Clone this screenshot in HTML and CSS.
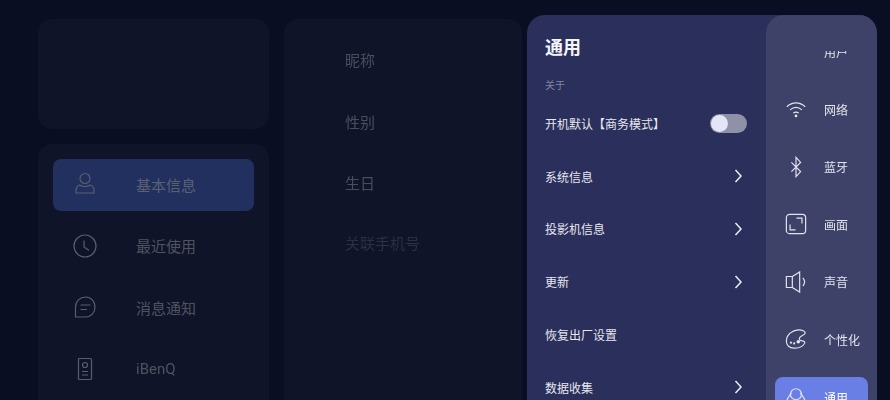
FILE: index.html
```html
<!DOCTYPE html>
<html lang="zh-CN">
<head>
<meta charset="utf-8">
<title>通用设置</title>
<link rel="stylesheet" href="styles.css">
</head>
<body>
<div class="app">
  <div class="col-left">
    <div class="card card-top"></div>
    <div class="card card-nav">
      <div class="nav-item active">
        <svg class="nav-icon" viewBox="0 0 24 24"><circle cx="12" cy="6.500" r="5"/><path d="M6.500 13c-3 1-4 3.500-3.500 8h18c.5-4.500-.5-7-3.500-8-3 2-8 2-11 0z"/></svg>
        <span>基本信息</span>
      </div>
      <div class="nav-item">
        <svg class="nav-icon" viewBox="0 0 24 24"><circle cx="12" cy="12" r="11"/><path d="M11 6.500v6.500l5 3.500"/></svg>
        <span>最近使用</span>
      </div>
      <div class="nav-item">
        <svg class="nav-icon" viewBox="0 0 24 24"><path d="M12.500 2c5.500 0 9.500 4.300 9.500 10s-4 10-9.500 10H2.500V12C2.500 6.300 7 2 12.500 2z"/><path d="M7.500 10h10M7.500 14.500h6.500"/></svg>
        <span>消息通知</span>
      </div>
      <div class="nav-item">
        <svg class="nav-icon" viewBox="0 0 24 24"><rect x="5.500" y="1.500" width="13" height="21" rx="1"/><circle cx="12" cy="8" r="2.500"/><path d="M9 14.500h6M9 18h6"/></svg>
        <span>iBenQ</span>
      </div>
    </div>
  </div>
  <div class="card card-profile">
    <div class="profile-row">昵称</div>
    <div class="profile-row">性别</div>
    <div class="profile-row">生日</div>
    <div class="profile-row dim">关联手机号</div>
  </div>
</div>

<div class="panel">
  <div class="settings">
    <h1 class="settings-title">通用</h1>
    <div class="settings-sub">关于</div>
    <div class="settings-row"><span>开机默认【商务模式】</span><span class="toggle"><span class="knob"></span></span></div>
    <div class="settings-row"><span>系统信息</span><svg class="chev" viewBox="0 0 8 14"><path d="M1.500 1l5.500 6-5.500 6"/></svg></div>
    <div class="settings-row"><span>投影机信息</span><svg class="chev" viewBox="0 0 8 14"><path d="M1.500 1l5.500 6-5.500 6"/></svg></div>
    <div class="settings-row"><span>更新</span><svg class="chev" viewBox="0 0 8 14"><path d="M1.500 1l5.500 6-5.500 6"/></svg></div>
    <div class="settings-row"><span>恢复出厂设置</span></div>
    <div class="settings-row"><span>数据收集</span><svg class="chev" viewBox="0 0 8 14"><path d="M1.500 1l5.500 6-5.500 6"/></svg></div>
  </div>
  <div class="rail">
    <div class="rail-clip">
      <div class="rail-list">
        <div class="rail-item"><span class="rail-icon"></span><span>用户</span></div>
        <div class="rail-item">
          <svg class="rail-icon" viewBox="0 0 24 24"><path d="M2 9.500c6-5.500 14-5.500 20 0M5.500 13c4-3.500 9-3.500 13 0M9 16.500c2-1.500 4-1.500 6 0"/><circle class="fill" cx="12" cy="19.500" r="1.500"/></svg>
          <span>网络</span>
        </div>
        <div class="rail-item">
          <svg class="rail-icon" viewBox="0 0 24 24"><path d="M7 7l10 10-5 5.500V1.500L17 7 7 17"/></svg>
          <span>蓝牙</span>
        </div>
        <div class="rail-item">
          <svg class="rail-icon" viewBox="0 0 24 24"><rect x="1.500" y="1.500" width="21" height="21" rx="3.500"/><path d="M12.500 5.500h6v6M5.500 12.500v6h6"/></svg>
          <span>画面</span>
        </div>
        <div class="rail-item">
          <svg class="rail-icon" viewBox="0 0 24 24"><path d="M1.500 6h6.500v12H1.500zM8 6l8-5v22l-8-5"/><path d="M19.500 7.500c2.500 3 2.500 6 0 9"/></svg>
          <span>声音</span>
        </div>
        <div class="rail-item">
          <svg class="rail-icon" viewBox="0 0 24 24"><path d="M14.500 2C8 2.500 1.500 7 1.500 14.500c0 4.500 3.500 7.500 8 7.500 5 0 10.500-2 12-5.500.5-1.500-1-2.500-3-2.500-2.500 0-3.500-2-2.500-3.500 1.500-2 5.500-3 6-5 .2-1.500-3.500-3.800-7.500-3.500z"/><circle class="fill" cx="6.500" cy="16" r="1.200"/><circle class="fill" cx="10" cy="16.800" r="1.200"/><circle class="fill" cx="14.500" cy="15" r="2"/></svg>
          <span>个性化</span>
        </div>
        <div class="rail-item active">
          <svg class="rail-icon" viewBox="0 0 24 24"><circle cx="12" cy="9" r="6"/><path d="M7 7.500C4 11 2 15 1.500 18c-.3 2 1 3 3 3h15c2 0 3.300-1 3-3-.5-3-3-7-6-10.500"/></svg>
          <span>通用</span>
        </div>
      </div>
    </div>
  </div>
</div>
</body>
</html>
```

FILE: styles.css
```css
* { box-sizing: border-box; }

html, body {
  margin: 0;
  width: 890px;
  height: 400px;
  overflow: hidden;
}

body {
  position: relative;
  background: #0a0e22;
  font-family: Roboto, "Noto Sans CJK SC", "Noto Sans", sans-serif;
}

.app {
  display: flex;
  gap: 15px;
  padding: 19px 0 0 38px;
  height: 400px;
  filter: blur(0.6px);
}

.col-left {
  display: flex;
  flex-direction: column;
  gap: 15px;
  width: 231px;
}

.card {
  background: #0f1428;
  border-radius: 14px;
}

.card-top { height: 110px; flex: none; }

.card-nav {
  flex: none;
  height: 300px;
  padding: 15px;
}

.nav-item {
  display: flex;
  align-items: center;
  gap: 39px;
  height: 52px;
  margin-bottom: 9.500px;
  padding: 0 0 2px 20px;
  border-radius: 8px;
  color: #4f5361;
  font-size: 15px;
}

.nav-item.active {
  background: #22305f;
  color: #5c6172;
}

.nav-icon {
  width: 24px;
  height: 24px;
  flex: none;
  fill: none;
  stroke: #5a5e6c;
  stroke-width: 1.200;
}

.card-profile {
  width: 238px;
  height: 400px;
  padding: 10px 0 0 61px;
  color: #4a4e5c;
  font-size: 15px;
}

.profile-row {
  height: 61.500px;
  display: flex;
  align-items: center;
}

.profile-row.dim {
  height: 58px;
  color: #2c3040;
}

.panel {
  position: absolute;
  left: 527px;
  top: 15px;
  width: 350px;
  height: 420px;
  display: flex;
  background: #2b2f5b;
  border-radius: 18px;
  filter: blur(0.5px);
}

.settings {
  flex: none;
  width: 239px;
  padding: 19px 19px 0 18px;
  color: #e6e7ef;
  font-size: 12px;
}

.settings-title {
  margin: 0;
  height: 28px;
  font-size: 18px;
  line-height: 28px;
  font-weight: 700;
  color: #f6f6fa;
}

.settings-sub {
  margin-top: 15px;
  height: 17px;
  line-height: 17px;
  font-size: 10px;
  color: #83869f;
}

.settings-row {
  display: flex;
  align-items: center;
  justify-content: space-between;
  height: 52.800px;
}

.settings-sub + .settings-row { margin-top: 3px; }

.toggle {
  position: relative;
  display: block;
  width: 37px;
  height: 19px;
  border-radius: 10px;
  background: #8f91a8;
}

.knob {
  position: absolute;
  left: 1px;
  top: 1px;
  width: 17px;
  height: 17px;
  border-radius: 50%;
  background: #e4e6f6;
}

.chev {
  width: 8px;
  height: 14px;
  margin-right: 5px;
  fill: none;
  stroke: #eceef6;
  stroke-width: 1.500;
}

.rail {
  flex: none;
  width: 111px;
  padding-top: 36px;
  background: #3e4268;
  border-radius: 18px;
}

.rail-clip {
  height: 349px;
  overflow: hidden;
}

.rail-list {
  margin-top: -28px;
  padding: 0 9px;
  color: #e4e5ee;
  font-size: 12px;
}

.rail-item {
  display: flex;
  align-items: center;
  gap: 17px;
  height: 57.500px;
  padding-left: 10px;
  border-radius: 8px;
}

.rail-item.active {
  height: 40px;
  margin-top: 9px;
  background: #6a7fe6;
  color: #fff;
}

.rail-icon {
  display: block;
  width: 22px;
  height: 22px;
  flex: none;
  fill: none;
  stroke: #e2e3ef;
  stroke-width: 1.300;
}

.rail-icon .fill {
  fill: #e2e3ef;
  stroke: none;
}
```
